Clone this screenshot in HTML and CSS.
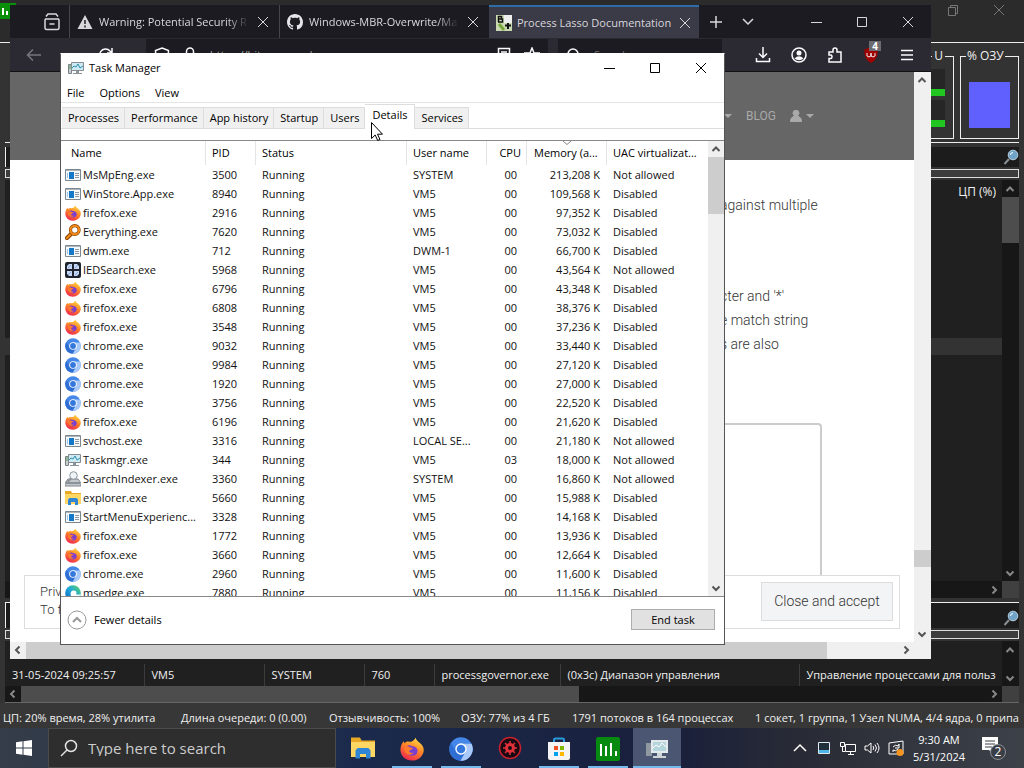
FILE: index.html
```html
<!DOCTYPE html>
<html lang="en">
<head>
    <meta charset="UTF-8">
    <meta name="viewport" content="width=device-width, initial-scale=1.0">
    <title>Task Manager</title>
    <link rel="stylesheet" href="styles.css">
</head>
<body>
    <!-- shared icons -->
    <svg class="sprite" aria-hidden="true">
        <defs>
            <linearGradient id="fire" x1="0.8" y1="0" x2="0.3" y2="1">
                <stop offset="0" stop-color="#ffe14a"/>
                <stop offset="0.45" stop-color="#ff8a26"/>
                <stop offset="1" stop-color="#f0264f"/>
            </linearGradient>
            <linearGradient id="sea" x1="0" y1="1" x2="1" y2="0">
                <stop offset="0" stop-color="#0b5fb5"/>
                <stop offset="0.5" stop-color="#1ea7dc"/>
                <stop offset="1" stop-color="#5fd65a"/>
            </linearGradient>
        </defs>
        <symbol id="app" viewBox="0 0 16 16">
            <path d="M0.500 2.500h15v11h-15z" fill="#f6f8fa" stroke="#7d8790"/>
            <path d="M1 3h14v1H1z" fill="#aeb6bc"/>
            <path d="M4 5h5v7H4z" fill="#1478c8"/>
            <path d="M2 6h1v5H2z" fill="#9ac8ea"/>
            <path d="M10 6.500h4M10 8.500h4M10 10.500h4" stroke="#8b98a4"/>
        </symbol>
        <symbol id="firefox" viewBox="0 0 16 16">
            <path d="M10.500 0.500c.3 1.700 1.400 2.300 2.600 3.300C15 5.300 16 7 15.800 9.300 15.300 13 12 15.700 8 15.700 3.500 15.700.3 12.600.3 8.500c0-2 .7-4.200 2.200-5.700l.5 1.400C4 3 5 2.900 6 3.200 7.500 3.300 9 3 10.500.5z" fill="url(#fire)"/>
            <path d="M4 6.500c1-1.300 3-1.400 4-.4 2 0 4 1.300 3.700 3.500-.3 2-2 3-3.900 2.900C5.200 12.400 3.800 10 4 6.500z" fill="#7a3fd0"/>
            <path d="M3 6.500c1.300-.6 3-.3 3.800.5l1.800.3c-.2 1.200-2.200 1-2.400 2.100-.1 1 1.500 1.600 2.800 1-1 1.800-3.600 1.900-5 .3C3.200 9.700 2.800 8 3 6.500z" fill="#ff7a2a"/>
        </symbol>
        <symbol id="chromium" viewBox="0 0 16 16">
            <circle cx="8" cy="8" r="7.800" fill="#4587e8"/>
            <path d="M8 4.500h7a7.800 7.800 0 0 1-7.500 11.300L11 10z" fill="#a9c9fb"/>
            <path d="M1.300 4A7.800 7.800 0 0 0 7.500 15.800L10 11.500 5 10z" fill="#2f6fd4"/>
            <circle cx="8" cy="8" r="3.800" fill="#fff"/>
            <circle cx="8" cy="8" r="2.900" fill="#3478dc"/>
        </symbol>
        <symbol id="everything" viewBox="0 0 16 16">
            <path d="M6.500 9.500L2 14" stroke="#8a4300" stroke-width="4" stroke-linecap="round"/>
            <path d="M6.500 9.500L2 14" stroke="#f58a1a" stroke-width="2" stroke-linecap="round"/>
            <circle cx="9.800" cy="6" r="4.300" fill="#fff" stroke="#8a4300" stroke-width="3.200"/>
            <circle cx="9.800" cy="6" r="4.300" fill="none" stroke="#f58a1a" stroke-width="2"/>
        </symbol>
        <symbol id="ied" viewBox="0 0 16 16">
            <rect width="16" height="16" rx="2" fill="#20242f"/>
            <path d="M4 2h3v5H2V4zM9 2h3l2 2v3H9zM2 9h5v5H4l-2-2zM9 9h5v3l-2 2H9z" fill="#c6d7f5"/>
            <path d="M3 6l3-3M10 6l3-3M3 13l3-3M10 13l3-3" stroke="#8ba6dc"/>
        </symbol>
        <symbol id="taskmgr" viewBox="0 0 16 16">
            <path d="M0.500 4.500h3v9h-3z" fill="#c8ccd0" stroke="#7a8288"/>
            <path d="M3.500 2.500h12v8h-12z" fill="#cdeaf2" stroke="#858d93"/>
            <path d="M4 8l2-2 2 1 2-3 2 4 3-2" fill="none" stroke="#2c8fae"/>
            <path d="M8 11h3v2H8zM5 13h9v1H5z" fill="#8b9398"/>
            <path d="M1 6h2M1 8h2" stroke="#4aa05a"/>
        </symbol>
        <symbol id="indexer" viewBox="0 0 16 16">
            <path d="M3 8h10l3 4v3H0v-3z" fill="#c3c8cc" stroke="#7e868c"/>
            <path d="M1 12h14" stroke="#555d63"/>
            <circle cx="8.500" cy="4.500" r="3.800" fill="#eef3f6" stroke="#8c949a"/>
            <path d="M6 7.500L2.500 11" stroke="#8c949a" stroke-width="2"/>
        </symbol>
        <symbol id="folder" viewBox="0 0 16 16">
            <path d="M0 1h6l1 2h9v11H0z" fill="#e9a827"/>
            <path d="M0 4h16v10H0z" fill="#fdd663"/>
            <path d="M3 15V9.500L4.500 8h7L13 9.500V15h-3v-3H6v3z" fill="#2f86d6"/>
        </symbol>
        <symbol id="edge" viewBox="0 0 16 16">
            <circle cx="8" cy="8" r="7.800" fill="url(#sea)"/>
            <path d="M6 7c2-3 7-1 5 2 1 1 3 1 4.500 0-1 4-6 5-8.500 3C5.500 11 5.200 9 6 7z" fill="#fff"/>
        </symbol>
        <symbol id="up" viewBox="0 0 16 16"><path d="M4.500 10L8 6.500 11.500 10" fill="none" stroke="currentColor" stroke-width="2"/></symbol>
        <symbol id="down" viewBox="0 0 16 16"><path d="M4.500 6.500L8 10l3.500-3.500" fill="none" stroke="currentColor" stroke-width="2"/></symbol>
        <symbol id="left" viewBox="0 0 16 16"><path d="M9.500 4.500L6 8l3.500 3.500" fill="none" stroke="currentColor" stroke-width="2"/></symbol>
        <symbol id="right" viewBox="0 0 16 16"><path d="M6.500 4.500L10 8l-3.500 3.500" fill="none" stroke="currentColor" stroke-width="2"/></symbol>
        <symbol id="x" viewBox="0 0 16 16"><path d="M3 3l10 10M13 3L3 13" fill="none" stroke="currentColor"/></symbol>
        <symbol id="max" viewBox="0 0 16 16"><path d="M3.500 3.500h9v9h-9z" fill="none" stroke="currentColor"/></symbol>
        <symbol id="min" viewBox="0 0 16 16"><path d="M3 8.500h11" stroke="currentColor"/></symbol>
        <symbol id="restore" viewBox="0 0 16 16"><path d="M3.500 5.500h7v8h-7zM5.500 5V3.500h7v8H11" fill="none" stroke="currentColor"/></symbol>
        <symbol id="lens" viewBox="0 0 16 16">
            <path d="M6 10L1.500 15" stroke="#8a8f94" stroke-width="2"/>
            <circle cx="10" cy="6" r="4.800" fill="#6fa3c8" stroke="#b9cfdd"/>
            <path d="M7.500 6a2.500 2.500 0 0 1 2.500-2.500" fill="none" stroke="#fff"/>
        </symbol>
    </svg>

    <main class="desktop">
        <section class="lasso">
            <header class="lasso-title">
                <svg class="lasso-logo" viewBox="0 0 16 16"><path d="M0 0h16v16H0z" fill="#0a8f0a"/><path d="M3 5v7M7 8v4M11 7v5" stroke="#fff" stroke-width="2"/></svg>
                <button aria-label="Restore"><svg class="i16"><use href="#restore"/></svg></button>
                <button aria-label="Close"><svg class="i16"><use href="#x"/></svg></button>
            </header>
            <div class="graphs">
                <fieldset class="cpu">
                    <legend>U</legend>
                    <div class="meter"></div>
                    <div class="meter"></div>
                </fieldset>
                <fieldset class="ram">
                    <legend>% ОЗУ</legend>
                    <div class="ram-fill"></div>
                </fieldset>
            </div>
            <label class="filter"><input type="text" aria-label="Filter"><svg class="i16"><use href="#lens"/></svg></label>
            <div class="splitter"></div>
            <div class="proc-list">
                <div class="proc-rows">
                    <div class="proc-head">ЦП (%)</div>
                    <div class="proc-selected"></div>
                </div>
                <div class="dark-scroll">
                    <svg class="i16"><use href="#up"/></svg>
                    <div class="dark-thumb"></div>
                    <svg class="i16 end"><use href="#down"/></svg>
                </div>
            </div>
            <div class="dark-hscroll"><svg class="i16 end"><use href="#right"/></svg><span class="corner"></span></div>
            <label class="filter lower"><input type="text" aria-label="Log filter"><svg class="i16"><use href="#lens"/></svg></label>
            <div class="splitter"></div>
            <div class="log">
                <table class="log-table">
                    <colgroup><col class="w-time"><col class="w-host"><col class="w-user"><col class="w-id"><col class="w-exe"><col class="w-act"><col></colgroup>
                    <tbody>
                        <tr><td>31-05-2024 09:25:57</td><td>VM5</td><td>SYSTEM</td><td>760</td><td>processgovernor.exe</td><td>(0x3c) Диапазон управления</td><td>Управление процессами для польз</td></tr>
                    </tbody>
                </table>
                <div class="dark-scroll"><svg class="i16"><use href="#up"/></svg><svg class="i16 end"><use href="#down"/></svg></div>
            </div>
            <div class="dark-hscroll log-scroll"><svg class="i16"><use href="#left"/></svg><span class="dark-hthumb"></span><svg class="i16 end"><use href="#right"/></svg><span class="corner"></span></div>
            <footer class="status">
                <span class="s-cpu">ЦП: 20% время, 28% утилита</span>
                <span class="s-queue">Длина очереди: 0 (0.00)</span>
                <span class="s-resp">Отзывчивость: 100%</span>
                <span class="s-mem">ОЗУ: 77% из 4 ГБ</span>
                <span class="s-thr">1791 потоков в 164 процессах</span>
                <span>1 сокет, 1 группа, 1 Узел NUMA, 4/4 ядра, 0 припа</span>
            </footer>
        </section>

        <section class="browser">
            <div class="tabstrip">
                <button class="view-btn" aria-label="View"><svg class="i18" viewBox="0 0 18 18" fill="none" stroke="currentColor" stroke-width="1.500"><path d="M3 3.500L5 1h8l2 2.500M2 6h14M3 6h12q1 0 1 1v8q0 1.500-1.500 1.500h-11Q2 16.500 2 15V7q0-1 1-1zM6.500 11h5"/></svg></button>
                <a class="tab" href="#">
                    <svg class="i16" viewBox="0 0 16 16"><path d="M8 1l7.500 14H.5z" fill="#d8d8dc"/><path d="M8 6v4M8 11.500v2" stroke="#1c1b22" stroke-width="1.500"/></svg>
                    <span class="tab-name">Warning: Potential Security R</span>
                    <svg class="i16"><use href="#x"/></svg>
                </a>
                <a class="tab" href="#">
                    <svg class="i16" viewBox="0 0 16 16"><path fill="#e6e6ea" d="M8 0C3.580 0 0 3.580 0 8c0 3.540 2.290 6.530 5.470 7.590.4.070.55-.17.55-.38 0-.19-.01-.82-.01-1.490-2.010.37-2.530-.49-2.690-.94-.09-.23-.48-.94-.82-1.130-.28-.15-.68-.52-.01-.53.63-.01 1.080.58 1.230.82.72 1.210 1.870.87 2.330.66.07-.52.28-.87.51-1.070-1.780-.2-3.640-.89-3.640-3.950 0-.87.31-1.590.82-2.150-.08-.2-.36-1.020.08-2.120 0 0 .67-.21 2.200.82.64-.18 1.320-.27 2-.27s1.360.09 2 .27c1.530-1.040 2.200-.82 2.200-.82.44 1.100.16 1.920.08 2.120.51.56.82 1.270.82 2.150 0 3.070-1.870 3.750-3.650 3.950.29.25.54.73.54 1.480 0 1.070-.01 1.930-.01 2.200 0 .21.15.46.55.38A8.010 8.010 0 0 0 16 8c0-4.420-3.580-8-8-8z"/></svg>
                    <span class="tab-name">Windows-MBR-Overwrite/Ma</span>
                    <svg class="i16"><use href="#x"/></svg>
                </a>
                <a class="tab active" href="#">
                    <svg class="i16" viewBox="0 0 16 16"><path d="M0 0h16v16H0z" fill="#c9d8b0"/><path d="M8 0h8v8H8z" fill="#eee"/><path d="M2.500 1v6M2 1.500h3.500v2.500h-3M5 4h1.500v3H2" fill="none" stroke="#111" stroke-width="1.500"/><path d="M3 9l5 6" stroke="#79a83a" stroke-width="3"/><path d="M9 10.500h6M12 8v6" stroke="#111" stroke-width="2"/></svg>
                    <span class="tab-name">Process Lasso Documentation</span>
                    <svg class="i16"><use href="#x"/></svg>
                </a>
                <button class="strip-btn" aria-label="New tab"><svg class="i16" viewBox="0 0 16 16"><path d="M8 2v12M2 8h12" stroke="currentColor" stroke-width="1.500"/></svg></button>
                <button class="strip-btn" aria-label="List tabs"><svg class="i16" viewBox="0 0 16 16"><path d="M3 5l5 5 5-5" fill="none" stroke="currentColor" stroke-width="1.500"/></svg></button>
                <div class="win-btns">
                    <button aria-label="Minimize"><svg class="i16"><use href="#min"/></svg></button>
                    <button aria-label="Maximize"><svg class="i16"><use href="#max"/></svg></button>
                    <button aria-label="Close"><svg class="i16"><use href="#x"/></svg></button>
                </div>
            </div>
            <div class="toolbar">
                <button class="back" aria-label="Back"><svg class="i16" viewBox="0 0 16 16"><path d="M15 8H2M7 2.500L1.500 8 7 13.500" fill="none" stroke="#77767e" stroke-width="1.500"/></svg></button>
                <button class="reload" aria-label="Reload"><svg class="i16" viewBox="0 0 16 16"><path d="M13.500 9a6 6 0 1 1-1.500-5l2 2M14 1v5H9" fill="none" stroke="#fbfbfe" stroke-width="1.500"/></svg></button>
                <div class="url">
                    <svg class="i16" viewBox="0 0 16 16"><path d="M8 1l6.500 2.500Q15 11 8 15 1 11 1.500 3.500z" fill="none" stroke="#fbfbfe" stroke-width="1.500"/></svg>
                    <svg class="i16" viewBox="0 0 16 16"><path d="M4.500 7V4.500a3.500 3.500 0 0 1 7 0V7M3 7h10v8H3z" fill="none" stroke="#fbfbfe" stroke-width="1.500"/></svg>
                    <input type="text" aria-label="Address" value="https://bitsum.com/">
                    <svg class="i16" viewBox="0 0 16 16"><path d="M2.500 1.500h11v13h-11zM5 5h6M5 8h6" fill="none" stroke="#fbfbfe" stroke-width="1.500"/></svg>
                    <svg class="i16" viewBox="0 0 16 16"><path d="M8 1l2 5h5.500l-4.500 3.500 1.500 5.500L8 12l-4.500 3L5 9.500.5 6H6z" fill="none" stroke="#fbfbfe" stroke-width="1.500"/></svg>
                </div>
                <div class="search">
                    <svg class="i16" viewBox="0 0 16 16"><circle cx="7" cy="7" r="5" fill="none" stroke="#fbfbfe" stroke-width="1.500"/><path d="M11 11l4 4" stroke="#fbfbfe" stroke-width="1.500"/></svg>
                    <input type="text" aria-label="Search" placeholder="Search">
                </div>
                <div class="tools">
                    <button aria-label="Downloads"><svg class="i16" viewBox="0 0 16 16"><path d="M8 0v10M4 6.500l4 4 4-4M1.500 11v3.500h13V11" fill="none" stroke="currentColor" stroke-width="1.500"/></svg></button>
                    <button aria-label="Account"><svg class="i16" viewBox="0 0 16 16"><circle cx="8" cy="8" r="7" fill="none" stroke="currentColor" stroke-width="1.500"/><circle cx="8" cy="6" r="2.500" fill="currentColor"/><path d="M3.500 11.500q4.500-4.500 9 0Q8 15 3.500 11.500z" fill="currentColor"/></svg></button>
                    <button aria-label="Extensions"><svg class="i16" viewBox="0 0 16 16"><path d="M2 5h4V3a2 2 0 0 1 4 0v2h4v10H2v-3.500h2a2 2 0 0 0 0-3.500H2z" fill="none" stroke="currentColor" stroke-width="1.500"/></svg></button>
                    <button class="ublock" aria-label="uBlock"><svg class="i16" viewBox="0 0 16 16"><path d="M8 0l6.500 2.500Q15.500 12 8 16 .5 12 1.500 2.500z" fill="#a00000"/><path d="M4 6v3q2 2 4 0V6v3q2 2 4 0V6" fill="none" stroke="#eee"/></svg><span class="badge">4</span></button>
                    <button aria-label="Menu"><svg class="i16" viewBox="0 0 16 16"><path d="M2 3.500h12M2 8h12M2 12.500h12" stroke="currentColor" stroke-width="1.500"/></svg></button>
                </div>
            </div>
            <div class="viewport">
                <div class="page">
                    <nav class="site-nav">
                        <span class="caret"></span>
                        <a href="#">BLOG</a>
                        <svg class="person" viewBox="0 0 12 12"><path d="M6 0a3 3 0 0 1 2 5.500l3 2.500q1 1 1 4H0q0-3 1-4l3-2.500A3 3 0 0 1 6 0z" fill="#a9a9a9"/></svg>
                        <span class="caret"></span>
                    </nav>
                    <article class="doc">
                        <p>against multiple</p>
                        <p class="second">cter and '*'<br>e match string<br>s are also</p>
                        <div class="code-box"></div>
                    </article>
                    <div class="cookie">
                        <p>Priv<br>To f</p>
                        <button>Close and accept</button>
                    </div>
                </div>
                <div class="page-scroll"><svg class="i16"><use href="#up"/></svg><div class="page-thumb"></div><svg class="i16"><use href="#down"/></svg></div>
            </div>
            <div class="page-hscroll"><svg class="i16"><use href="#left"/></svg><span class="page-hthumb"></span><svg class="i16 end"><use href="#right"/></svg></div>
        </section>

        <section class="tm">
            <header class="tm-title">
                <svg class="i16"><use href="#taskmgr"/></svg>
                <h1>Task Manager</h1>
                <button aria-label="Minimize"><svg class="i16"><use href="#min"/></svg></button>
                <button aria-label="Maximize"><svg class="i16"><use href="#max"/></svg></button>
                <button aria-label="Close"><svg class="i16"><use href="#x"/></svg></button>
            </header>
            <nav class="tm-menu"><button>File</button><button>Options</button><button>View</button></nav>
            <nav class="tm-tabs">
                <button>Processes</button><button>Performance</button><button>App history</button><button>Startup</button><button>Users</button><button class="current">Details</button><button>Services</button>
            </nav>
            <div class="tm-list">
                <div class="tm-rows">
                    <table>
                        <colgroup><col class="c-name"><col class="c-pid"><col class="c-status"><col class="c-user"><col class="c-cpu"><col class="c-mem"><col></colgroup>
                        <thead>
                            <tr><th>Name</th><th>PID</th><th>Status</th><th>User name</th><th>CPU</th><th class="sorted">Memory (a...<svg viewBox="0 0 8 4"><path d="M0 0l4 3.500L8 0" fill="none" stroke="#888"/></svg></th><th>UAC virtualizat...</th></tr>
                        </thead>
                        <tbody>
                            <tr><td><svg><use href="#app"/></svg>MsMpEng.exe</td><td>3500</td><td>Running</td><td>SYSTEM</td><td>00</td><td>213,208 K</td><td>Not allowed</td></tr>
                            <tr><td><svg><use href="#app"/></svg>WinStore.App.exe</td><td>8940</td><td>Running</td><td>VM5</td><td>00</td><td>109,568 K</td><td>Disabled</td></tr>
                            <tr><td><svg><use href="#firefox"/></svg>firefox.exe</td><td>2916</td><td>Running</td><td>VM5</td><td>00</td><td>97,352 K</td><td>Disabled</td></tr>
                            <tr><td><svg><use href="#everything"/></svg>Everything.exe</td><td>7620</td><td>Running</td><td>VM5</td><td>00</td><td>73,032 K</td><td>Disabled</td></tr>
                            <tr><td><svg><use href="#app"/></svg>dwm.exe</td><td>712</td><td>Running</td><td>DWM-1</td><td>00</td><td>66,700 K</td><td>Disabled</td></tr>
                            <tr><td><svg><use href="#ied"/></svg>IEDSearch.exe</td><td>5968</td><td>Running</td><td>VM5</td><td>00</td><td>43,564 K</td><td>Not allowed</td></tr>
                            <tr><td><svg><use href="#firefox"/></svg>firefox.exe</td><td>6796</td><td>Running</td><td>VM5</td><td>00</td><td>43,348 K</td><td>Disabled</td></tr>
                            <tr><td><svg><use href="#firefox"/></svg>firefox.exe</td><td>6808</td><td>Running</td><td>VM5</td><td>00</td><td>38,376 K</td><td>Disabled</td></tr>
                            <tr><td><svg><use href="#firefox"/></svg>firefox.exe</td><td>3548</td><td>Running</td><td>VM5</td><td>00</td><td>37,236 K</td><td>Disabled</td></tr>
                            <tr><td><svg><use href="#chromium"/></svg>chrome.exe</td><td>9032</td><td>Running</td><td>VM5</td><td>00</td><td>33,440 K</td><td>Disabled</td></tr>
                            <tr><td><svg><use href="#chromium"/></svg>chrome.exe</td><td>9984</td><td>Running</td><td>VM5</td><td>00</td><td>27,120 K</td><td>Disabled</td></tr>
                            <tr><td><svg><use href="#chromium"/></svg>chrome.exe</td><td>1920</td><td>Running</td><td>VM5</td><td>00</td><td>27,000 K</td><td>Disabled</td></tr>
                            <tr><td><svg><use href="#chromium"/></svg>chrome.exe</td><td>3756</td><td>Running</td><td>VM5</td><td>00</td><td>22,520 K</td><td>Disabled</td></tr>
                            <tr><td><svg><use href="#firefox"/></svg>firefox.exe</td><td>6196</td><td>Running</td><td>VM5</td><td>00</td><td>21,620 K</td><td>Disabled</td></tr>
                            <tr><td><svg><use href="#app"/></svg>svchost.exe</td><td>3316</td><td>Running</td><td>LOCAL SE...</td><td>00</td><td>21,180 K</td><td>Not allowed</td></tr>
                            <tr><td><svg><use href="#taskmgr"/></svg>Taskmgr.exe</td><td>344</td><td>Running</td><td>VM5</td><td>03</td><td>18,000 K</td><td>Not allowed</td></tr>
                            <tr><td><svg><use href="#indexer"/></svg>SearchIndexer.exe</td><td>3360</td><td>Running</td><td>SYSTEM</td><td>00</td><td>16,860 K</td><td>Not allowed</td></tr>
                            <tr><td><svg><use href="#folder"/></svg>explorer.exe</td><td>5660</td><td>Running</td><td>VM5</td><td>00</td><td>15,988 K</td><td>Disabled</td></tr>
                            <tr><td><svg><use href="#app"/></svg>StartMenuExperienc...</td><td>3328</td><td>Running</td><td>VM5</td><td>00</td><td>14,168 K</td><td>Disabled</td></tr>
                            <tr><td><svg><use href="#firefox"/></svg>firefox.exe</td><td>1772</td><td>Running</td><td>VM5</td><td>00</td><td>13,936 K</td><td>Disabled</td></tr>
                            <tr><td><svg><use href="#firefox"/></svg>firefox.exe</td><td>3660</td><td>Running</td><td>VM5</td><td>00</td><td>12,664 K</td><td>Disabled</td></tr>
                            <tr><td><svg><use href="#chromium"/></svg>chrome.exe</td><td>2960</td><td>Running</td><td>VM5</td><td>00</td><td>11,600 K</td><td>Disabled</td></tr>
                            <tr><td><svg><use href="#edge"/></svg>msedge.exe</td><td>7880</td><td>Running</td><td>VM5</td><td>00</td><td>11,156 K</td><td>Disabled</td></tr>
                        </tbody>
                    </table>
                </div>
                <div class="tm-scroll"><svg class="i16"><use href="#up"/></svg><div class="tm-thumb"></div><svg class="i16 end"><use href="#down"/></svg></div>
            </div>
            <footer class="tm-foot">
                <button class="fewer"><svg viewBox="0 0 20 20"><circle cx="10" cy="10" r="9" fill="#fff" stroke="#999"/><path d="M6 12l4-4 4 4" fill="none" stroke="#999" stroke-width="2"/></svg>Fewer details</button>
                <button class="end-task">End task</button>
            </footer>
        </section>

        <svg class="cursor" viewBox="0 0 12 19"><path d="M.5.5v16l3.700-3.500 2.500 5.500 2.300-1-2.500-5.300h5z" fill="#fff" stroke="#000"/></svg>
    </main>

    <footer class="taskbar">
        <button class="start" aria-label="Start"><svg class="i16" viewBox="0 0 16 16"><path d="M0 2.200l6.500-.9v6.200H0zM7.500 1.200L16 0v7.500H7.500zM0 8.500h6.500v6.200L0 13.800zM7.500 8.500H16V16l-8.500-1.200z" fill="#fff"/></svg></button>
        <label class="find">
            <svg class="i18" viewBox="0 0 18 18"><circle cx="11" cy="7" r="5.500" fill="none" stroke="#e4e4e4" stroke-width="1.500"/><path d="M7 11l-6 6" stroke="#e4e4e4" stroke-width="1.500"/></svg>
            <input type="text" aria-label="Search" placeholder="Type here to search">
        </label>
        <nav class="apps">
            <button aria-label="File Explorer"><svg><use href="#folder"/></svg></button>
            <button class="open" aria-label="Firefox"><svg><use href="#firefox"/></svg></button>
            <button class="open" aria-label="Chromium"><svg><use href="#chromium"/></svg></button>
            <button aria-label="Tools"><svg viewBox="0 0 24 24"><circle cx="12" cy="12" r="10.500" fill="#180a10" stroke="#c8202c" stroke-width="1.500"/><circle cx="12" cy="12" r="3.500" fill="none" stroke="#e0303a" stroke-width="3"/><path d="M12 5v4M12 15v4M5 12h4M15 12h4M7 7l3 3M14 14l3 3M17 7l-3 3M10 14l-3 3" stroke="#e0303a" stroke-width="1.500"/></svg></button>
            <button class="open" aria-label="Store"><svg viewBox="0 0 24 24"><path d="M7 6V3q0-1.500 1.500-1.500h7Q17 1.500 17 3v3" fill="none" stroke="#2b9be0" stroke-width="2"/><path d="M1 5h22v16q0 2-2 2H3q-2 0-2-2z" fill="#f4f4f4"/><path d="M7 9h4v4H7z" fill="#f05022"/><path d="M13 9h4v4h-4z" fill="#7eb900"/><path d="M7 15h4v4H7z" fill="#00a3ee"/><path d="M13 15h4v4h-4z" fill="#ffb800"/></svg></button>
            <button class="open" aria-label="Process Lasso"><svg viewBox="0 0 24 24"><rect width="24" height="24" rx="2" fill="#078a10"/><path d="M5 7v12M10 9v10M15 6v13M20 14v5" stroke="#fff" stroke-width="2"/></svg></button>
            <button class="open focus" aria-label="Task Manager"><svg viewBox="0 0 24 24"><path d="M1 6h6v13H1z" fill="#8f989e"/><path d="M6 3h17v13H6z" fill="#e4eaec"/><path d="M8 5h13v9H8z" fill="#b5d5dc"/><path d="M8 11l3-3 3 2 3-4 4 4" fill="none" stroke="#fff"/><path d="M12 16h5v3h-5zM8 19h13v2H8z" fill="#cfd4d6"/></svg></button>
        </nav>
        <div class="tray">
            <svg class="i16" viewBox="0 0 16 16"><path d="M2 11l6-6 6 6" fill="none" stroke="#fff" stroke-width="1.500"/></svg>
            <svg class="i16" viewBox="0 0 16 16"><path d="M2.500 2.500h11v11h-11z" fill="#20303a" stroke="#dfe8ee"/><path d="M3 10h10v3H3z" fill="#4db6e8"/></svg>
            <svg class="i16" viewBox="0 0 16 16"><path d="M5.500 4.500h10v7h-10zM8 14.500h6M10.500 12v2M.5 2.500h4v4h-4zM2.500 7v4.500H5" fill="none" stroke="#fff"/></svg>
            <svg class="i16" viewBox="0 0 16 16"><path d="M1 6h2.500L7 3v10l-3.500-3H1zM9 6q1.500 2 0 4M11 4.500q3 3.500 0 7M13 3q4 5 0 10" fill="none" stroke="#fff"/></svg>
            <svg class="i16" viewBox="0 0 16 16"><path d="M1 3l14-2v13H1z" fill="none" stroke="#fff"/><path d="M5 7q2-3 5-1l1-2v4H7M10 9q-2 3-5 1v2" fill="none" stroke="#fff"/><circle cx="12" cy="12.500" r="3.500" fill="#f7941d"/></svg>
            <time class="clock">9:30 AM<br>5/31/2024</time>
            <svg class="notes" viewBox="0 0 26 26"><path d="M1 2h16v13h-5v4l-4-4H1z" fill="#fff"/><path d="M4 6h10M4 9h10M4 12h7" stroke="#3a3e46"/><circle cx="17" cy="17" r="7.500" fill="#3a3e46" stroke="#8b9097"/><text x="17" y="21" text-anchor="middle">2</text></svg>
        </div>
    </footer>
</body>
</html>
```
FILE: styles.css
```css
* {
    box-sizing: border-box;
}

body {
    margin: 0;
    height: 100vh;
    display: flex;
    flex-direction: column;
    overflow: hidden;
    background: #333;
    font-family: "Open Sans", "Noto Sans", sans-serif;
    font-size: 11px;
    line-height: 16px;
    color: #000;
}

button {
    border: 0;
    padding: 0;
    background: none;
    font: inherit;
    color: inherit;
}

button svg,
a svg {
    display: block;
}

a {
    color: inherit;
    text-decoration: none;
}

input {
    min-width: 0;
    border: 0;
    padding: 0;
    background: none;
    font: inherit;
    color: inherit;
}

p {
    margin: 0;
}

.sprite {
    position: absolute;
    width: 0;
    height: 0;
}

.i16 {
    width: 16px;
    height: 16px;
    flex: none;
}

.i18 {
    width: 18px;
    height: 18px;
    flex: none;
}

.end {
    margin-top: auto;
}

.desktop {
    flex: 1;
    min-height: 0;
    position: relative;
    overflow: hidden;
}

/* Process Lasso, fills the desktop */
.lasso {
    height: 100%;
    display: flex;
    flex-direction: column;
    padding: 0 5px;
    background: #333;
    color: #f0f0f0;
}

.lasso-title {
    display: flex;
    align-items: flex-start;
    gap: 30px;
    height: 43px;
    margin: 0 -5px;
    padding: 2px 17px 0 0;
    background: #2b2b2b;
    border-bottom: 1px solid #eee;
    color: #777;
}

.lasso-logo {
    width: 16px;
    height: 18px;
    margin-right: auto;
}

.graphs {
    display: flex;
    justify-content: flex-end;
    gap: 6px;
    height: 100px;
    padding: 5px 0 3px;
    border-bottom: 1px solid #eee;
    font-size: 12px;
}

.graphs fieldset {
    margin: 0;
    min-width: 0;
    border: 1px solid #eee;
    padding: 5px 8px 8px;
}

.graphs legend {
    padding: 0 2px;
    line-height: 16px;
}

.cpu {
    width: 60px;
}

.cpu legend {
    margin-left: auto;
}

.graphs .ram {
    width: 59px;
    padding-top: 18px;
}

.graphs .ram legend {
    margin-left: -3px;
    padding: 0 1px;
    white-space: nowrap;
}

.ram-fill {
    height: 46px;
    background: #6060ff;
}

.meter {
    height: 27px;
    margin-bottom: 4px;
    background: #262626;
    border-bottom: 7px solid #21c621;
}

.filter {
    display: flex;
    align-items: center;
    height: 20px;
    margin-top: 4px;
    background: #1c1c1c;
    border-left: 1px solid #eee;
}

.filter input {
    flex: 1;
}

.splitter {
    height: 9px;
    margin: 2px 0;
    background: #3c3c3c;
    border: 1px solid #ddd;
}

.proc-list {
    flex: 1;
    min-height: 0;
    display: flex;
    background: #202020;
}

.proc-rows {
    flex: 1;
    text-align: right;
}

.proc-head {
    padding: 4px 6px 2px;
    font-size: 12px;
}

.proc-selected {
    height: 17px;
    margin-top: 136px;
    background: #333;
}

.dark-scroll {
    display: flex;
    flex-direction: column;
    width: 17px;
    padding-top: 1px;
    background: #171717;
    color: #888;
}

.dark-thumb {
    height: 46px;
    background: #4d4d4d;
}

.dark-hscroll {
    display: flex;
    height: 17px;
    background: #171717;
    color: #888;
}

.dark-hscroll .end {
    margin-left: auto;
}

.corner {
    width: 17px;
    background: #404040;
}

.lower {
    height: 26px;
    padding-top: 4px;
    border-top: 1px solid #eee;
}

.log {
    display: flex;
    align-items: flex-end;
    height: 45px;
    background: #202020;
}

.log .dark-scroll {
    align-self: stretch;
}

.log-table {
    flex: 1;
    width: 0;
    table-layout: fixed;
    border-collapse: collapse;
}

.log-table td {
    height: 22px;
    overflow: hidden;
    white-space: nowrap;
    padding: 0 0 0 7px;
    border-right: 1px solid #3c3c3c;
}

.log-table td:last-child {
    border-right: 0;
}

.w-time { width: 139px; }
.w-host { width: 120px; }
.w-user { width: 100px; }
.w-id { width: 70px; }
.w-exe { width: 126px; }
.w-act { width: 239px; }

.dark-hthumb {
    width: 55%;
    background: #4d4d4d;
}

.log-scroll {
    border-bottom: 1px solid #666;
}

.status {
    display: flex;
    align-items: center;
    height: 25px;
    margin: 0 -5px;
    padding: 4px 0 0 3px;
    background: #373737;
    white-space: nowrap;
}

.status span {
    flex: none;
}

.s-cpu { width: 178px; }
.s-queue { width: 148px; }
.s-resp { width: 132px; }
.s-mem { width: 111px; }
.s-thr { width: 183px; }

/* Browser */
.browser {
    position: absolute;
    inset: 5px 93px 69px 10px;
    display: flex;
    flex-direction: column;
    background: #fff;
}

.tabstrip {
    display: flex;
    height: 33px;
    background: #1c1b22;
    color: #d8d8dc;
}

.view-btn {
    width: 59px;
    padding: 0 0 0 33px;
}

.tab {
    display: flex;
    align-items: center;
    gap: 6px;
    width: 210px;
    padding: 0 8px 0 7px;
    border-left: 1px solid #46454d;
}

.tab-name {
    flex: 1;
    overflow: hidden;
    white-space: nowrap;
    mask-image: linear-gradient(to right, #000 85%, transparent);
}

.tab.active {
    gap: 5px;
    padding-right: 6px;
    background: #3b3a47;
    border-left: 0;
    border-top: 2px solid #2f6cab;
}

.active .tab-name {
    mask-image: none;
}

.strip-btn {
    width: 32px;
    padding-left: 9px;
}

.win-btns {
    display: flex;
    gap: 30px;
    margin-left: auto;
    padding-right: 15px;
}

.toolbar {
    display: flex;
    align-items: center;
    height: 34px;
    background: #2b2a33;
    color: #fbfbfe;
    border-bottom: 1px solid #111;
}

.back {
    padding: 0 56px 0 16px;
}

.reload {
    margin-right: 32px;
}

.url,
.search {
    display: flex;
    align-items: center;
    gap: 12px;
    height: 32px;
    padding: 0 8px;
    background: #1c1b22;
    color: #aaa;
}

.url {
    flex: 1;
    margin-right: 10px;
}

.url input {
    flex: 1;
}

.search {
    width: 164px;
}

.search input {
    width: 80px;
}

.tools {
    display: flex;
    gap: 20px;
    margin-left: 33px;
    padding-right: 16px;
}

.ublock {
    position: relative;
}

.badge {
    position: absolute;
    top: -6px;
    left: 6px;
    width: 12px;
    background: #6b6b70;
    color: #fff;
    font-size: 10px;
    font-weight: 700;
    line-height: 10px;
    text-align: center;
}

.viewport {
    flex: 1;
    min-height: 0;
    display: flex;
}

.page {
    flex: 1;
    display: flex;
    flex-direction: column;
    font-family: Roboto, sans-serif;
    font-size: 14px;
    font-weight: 300;
    line-height: 24px;
    color: #333;
}

.site-nav {
    display: flex;
    align-items: center;
    justify-content: flex-end;
    gap: 4px;
    height: 88px;
    padding-right: 100px;
    background: #666;
    color: #a9a9a9;
    font-size: 12px;
    font-weight: 400;
}

.site-nav a {
    margin: 0 10px;
}

.person {
    width: 12px;
    height: 12px;
}

.caret {
    border: 4px solid transparent;
    border-top-color: #a9a9a9;
    border-bottom: 0;
}

.doc {
    flex: 1;
    min-height: 0;
    display: flex;
    flex-direction: column;
    padding: 33px 92px 0 710px;
}

.doc p {
    white-space: nowrap;
}

.doc .second {
    margin: 67px 0;
}

.code-box {
    flex: 1;
    border: 2px solid #ccc;
    border-width: 2px 2px 0 0;
    border-top-right-radius: 4px;
}

.cookie {
    display: flex;
    justify-content: space-between;
    align-items: center;
    height: 54px;
    margin: 0 14px 13px;
    padding: 0 6px 2px 15px;
    border: 1px solid #ddd;
    font-size: 13px;
    line-height: 18px;
}

.cookie button {
    width: 132px;
    height: 39px;
    border: 1px solid #ddd;
    background: #f3f4f5;
    font-size: 14px;
}

.page-scroll {
    display: flex;
    flex-direction: column;
    width: 17px;
    background: #f0f0f0;
    color: #555;
}

.page-thumb {
    height: 17px;
    margin: auto 0 59px;
    background: #cdcdcd;
}

.page-hscroll {
    display: flex;
    height: 17px;
    background: #f0f0f0;
    color: #555;
}

.page-hthumb {
    width: 87%;
    background: #cdcdcd;
}

.page-hscroll .end {
    margin: 0 17px 0 auto;
}

/* Task Manager */
.tm {
    position: absolute;
    inset: 53px 299px 83px 60px;
    display: flex;
    flex-direction: column;
    background: #fff;
    border: 1px solid #555;
    border-top-color: #fff;
}

.tm-title {
    display: flex;
    align-items: center;
    height: 28px;
    padding: 0 15px 0 7px;
    gap: 30px;
}

.tm-title h1 {
    flex: 1;
    margin: 0 0 0 -25px;
    font-size: 11px;
    font-weight: 400;
}

.tm-menu {
    display: flex;
    gap: 15px;
    height: 21px;
    padding: 2px 6px 0;
    border-bottom: 1px solid #e5e5e5;
}

.tm-tabs {
    display: flex;
    align-items: flex-end;
    height: 26px;
    padding-left: 1px;
    border-bottom: 1px solid #ddd;
}

.tm-tabs button {
    height: 21px;
    padding: 0 5px 0 6px;
    background: #f0f0f0;
    border: 1px solid #ddd;
    border-width: 1px 1px 0 0;
    white-space: nowrap;
}

.tm-tabs .current {
    height: 25px;
    margin-bottom: -1px;
    padding: 0 7px 4px;
    background: #fff;
}

.tm-list {
    flex: 1;
    min-height: 0;
    display: flex;
    margin-top: 11px;
    border: 1px solid #888;
    border-width: 1px 0;
}

.tm-rows {
    flex: 1;
    overflow: hidden;
}

.tm table {
    width: 100%;
    table-layout: fixed;
    border-collapse: separate;
    border-spacing: 0;
}

.tm th {
    height: 24px;
    padding: 0 0 0 6px;
    border-right: 1px solid #e5e5e5;
    font-weight: 400;
    text-align: left;
    white-space: nowrap;
}

.tm th:first-child {
    padding-left: 10px;
}

.tm th:last-child {
    border-right: 0;
}

.tm th:nth-child(5) {
    padding: 0 5px 0 0;
    text-align: right;
}

.tm .sorted {
    position: relative;
    padding-left: 7px;
}

.sorted svg {
    position: absolute;
    top: 0;
    left: 36px;
    width: 8px;
    height: 4px;
}

.tm td {
    height: 19px;
    padding: 0 0 0 6px;
    line-height: 18px;
    white-space: nowrap;
    overflow: hidden;
    color: #111;
}

.tm td:first-child {
    padding-left: 4px;
}

.tm td svg {
    width: 16px;
    height: 16px;
    margin-right: 2px;
    vertical-align: -4px;
}

.tm td:nth-child(5),
.tm td:nth-child(6) {
    padding: 0 7px 0 0;
    text-align: right;
}

.tm td:nth-child(5) {
    padding-right: 10px;
}

.c-name { width: 145px; }
.c-pid { width: 50px; }
.c-status { width: 151px; }
.c-user { width: 80px; }
.c-cpu { width: 40px; }
.c-mem { width: 80px; }

.tm-scroll {
    display: flex;
    flex-direction: column;
    width: 16px;
    background: #f0f0f0;
    color: #555;
}

.tm-thumb {
    height: 57px;
    background: #cdcdcd;
}

.tm-foot {
    display: flex;
    align-items: center;
    justify-content: space-between;
    height: 47px;
    padding: 0 9px 2px 6px;
}

.fewer {
    display: flex;
    align-items: center;
    gap: 7px;
}

.fewer svg {
    width: 20px;
    height: 20px;
}

.end-task {
    width: 84px;
    height: 21px;
    background: #e1e1e1;
    border: 1px solid #adadad;
}

.cursor {
    position: absolute;
    left: 371px;
    top: 122px;
    width: 12px;
    height: 19px;
}

/* Taskbar */
.taskbar {
    display: flex;
    height: 40px;
    background: linear-gradient(to right, #353d49, #1b2a4c 35%, #191f3c 65%, #282b35 78%, #3d4148);
    color: #fff;
}

.start {
    width: 48px;
    padding: 0 16px;
}

.find {
    display: flex;
    align-items: center;
    gap: 10px;
    width: 288px;
    padding: 0 11px;
    background: #2e2e2e;
    border: 1px solid #4b4b4b;
}

.find input {
    flex: 1;
    font-size: 15px;
}

.find input::placeholder {
    color: #ccc;
    opacity: 1;
}

.apps {
    display: flex;
    gap: 1px;
    padding-left: 3px;
}

.apps button {
    width: 48px;
    padding: 6px 12px 7px;
}

.apps svg {
    width: 24px;
    height: 24px;
}

.apps .open {
    padding-bottom: 5px;
    background: linear-gradient(#76b9ed, #76b9ed) center bottom / 40px 2px no-repeat;
}

.apps .focus {
    background: #4a5672;
    border-bottom: 2px solid #76b9ed;
    padding-bottom: 3px;
}

.tray {
    display: flex;
    align-items: center;
    gap: 8px;
    margin-left: auto;
    padding-right: 17px;
}

.clock {
    width: 54px;
    line-height: 17px;
    text-align: center;
}

.notes {
    width: 26px;
    height: 26px;
    margin-left: 7px;
}

.notes text {
    fill: #fff;
    font-size: 12px;
}
```
